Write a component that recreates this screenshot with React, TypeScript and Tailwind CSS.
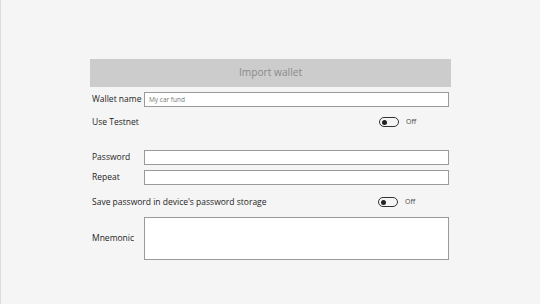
import React from 'react'

function Toggle() {
  return (
    <div className="flex items-center gap-[7px]">
      <div className="flex h-[10px] w-[20px] items-center rounded-full border border-[#333] px-[2px]">
        <div className="h-[5px] w-[5px] rounded-full bg-[#222]" />
      </div>
      <span className="text-[7px] text-[#444]">Off</span>
    </div>
  )
}

const inputCls = 'h-[15px] w-[305px] border border-[#9a9a9a] bg-white'

export default function App() {
  return (
    <div
      className="h-[304px] w-[540px] border-l border-[#dcdcdc] bg-[#f5f5f5] pt-[59px] text-[#1e1e1e]"
      style={{ fontFamily: '"Open Sans", "Noto Sans", sans-serif' }}
    >
      <div className="ml-[89px] w-[361px]">
        <div className="flex h-[28px] items-center justify-center bg-[#cccccc] text-[10.2px] text-[#8a8a8a]">
          Import wallet
        </div>

        <div className="mt-[5px] flex items-center">
          <span className="w-[54px] pl-[2px] text-[8.5px] whitespace-nowrap">Wallet name</span>
          <div className={`${inputCls} flex items-center px-[4px] text-[6.5px] text-[#777]`}>My car fund</div>
        </div>

        <div className="mt-[7px] flex h-[16px] items-center">
          <span className="w-[289px] pl-[2px] text-[8.5px]">Use Testnet</span>
          <Toggle />
        </div>

        <div className="mt-[20px] flex items-center">
          <span className="w-[54px] pl-[2px] text-[8.5px]">Password</span>
          <div className={inputCls} />
        </div>
        <div className="mt-[5px] flex items-center">
          <span className="w-[54px] pl-[2px] text-[8.5px]">Repeat</span>
          <div className={inputCls} />
        </div>

        <div className="mt-[9px] flex h-[16px] items-center">
          <span className="w-[288px] pl-[2px] text-[8.5px]">Save password in device's password storage</span>
          <Toggle />
        </div>

        <div className="mt-[7px] flex items-center">
          <span className="w-[54px] pl-[2px] text-[8.5px]">Mnemonic</span>
          <div className="h-[43px] w-[305px] border border-[#9a9a9a] bg-white" />
        </div>
      </div>
    </div>
  )
}
